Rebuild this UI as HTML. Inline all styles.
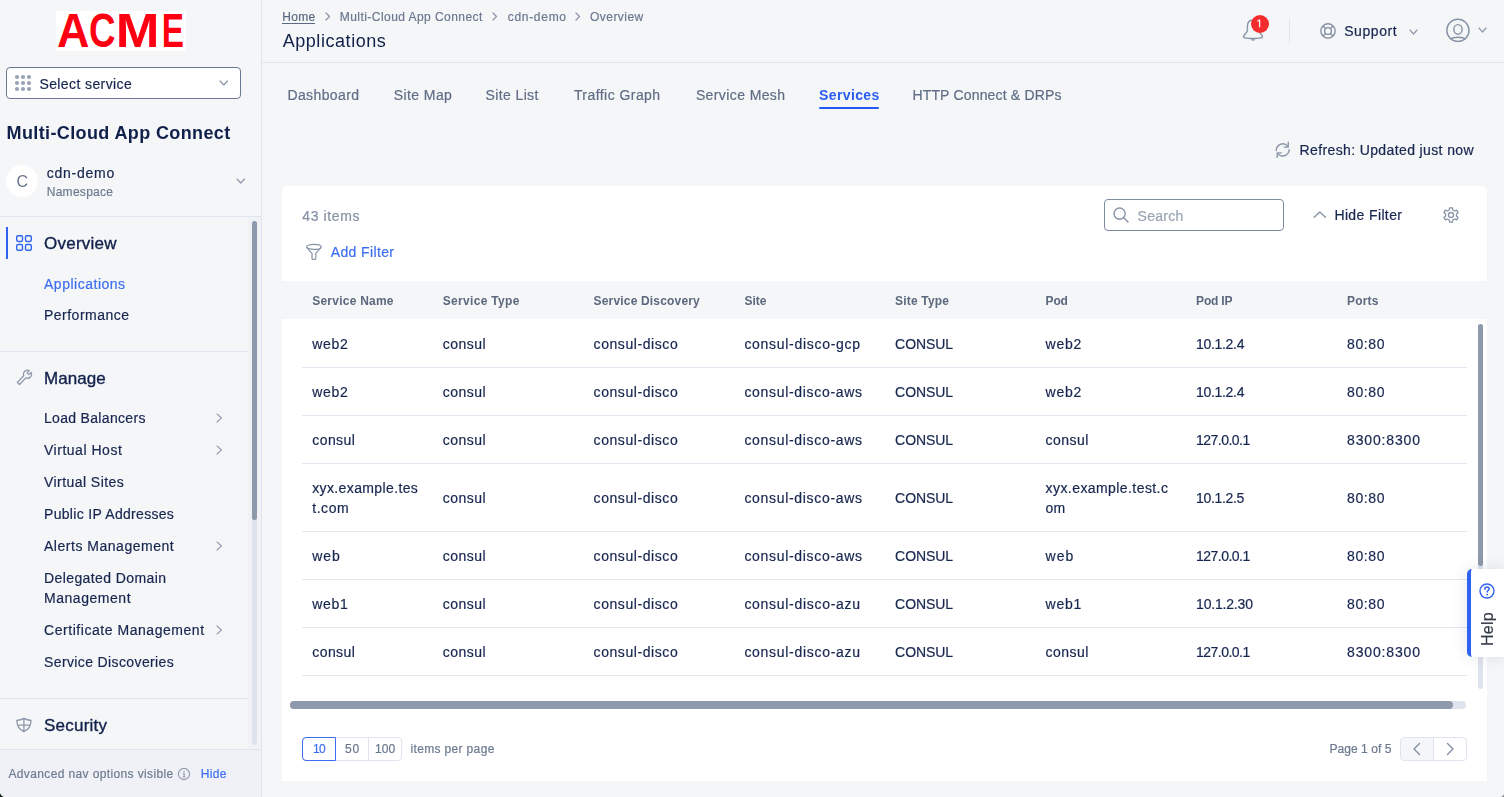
<!DOCTYPE html>
<html><head><meta charset="utf-8"><style>
html,body{margin:0;padding:0}
body{width:1504px;height:797px;overflow:hidden;position:relative;background:#f5f6f8;font-family:"Liberation Sans",sans-serif}
</style></head><body>
<div style="position:absolute;left:0px;top:0px;width:261px;height:797px;background:#f5f6f8"></div>
<div style="position:absolute;left:261px;top:0px;width:1px;height:797px;background:#dfe4ee"></div>
<div style="position:absolute;left:56px;top:11px;width:130px;height:40px;background:#fff"></div>
<svg style="position:absolute;left:50px;top:0px;" width="150" height="60" viewBox="0 0 150 60" fill="none"><text x="7" y="47.4" font-family="Liberation Sans" font-weight="700" font-size="48.5" fill="#ff0012" textLength="32.5" lengthAdjust="spacingAndGlyphs">A</text><text x="39" y="47.4" font-family="Liberation Sans" font-weight="700" font-size="48.5" fill="#ff0012" textLength="26.5" lengthAdjust="spacingAndGlyphs">C</text><text x="65.8" y="47.4" font-family="Liberation Sans" font-weight="700" font-size="48.5" fill="#ff0012" textLength="43.7" lengthAdjust="spacingAndGlyphs">M</text><text x="111.80000000000001" y="47.4" font-family="Liberation Sans" font-weight="700" font-size="48.5" fill="#ff0012" textLength="22.2" lengthAdjust="spacingAndGlyphs">E</text></svg>
<div style="position:absolute;left:6px;top:67px;width:235px;height:32px;background:#fff;border:1px solid #6b7892;border-radius:4px;box-sizing:border-box"></div>
<svg style="position:absolute;left:14px;top:74px;" width="18" height="18" viewBox="0 0 18 18" fill="none"><circle cx="3" cy="3" r="2.1" fill="#98a3b5"/><circle cx="3" cy="9" r="2.1" fill="#98a3b5"/><circle cx="3" cy="15" r="2.1" fill="#98a3b5"/><circle cx="9" cy="3" r="2.1" fill="#98a3b5"/><circle cx="9" cy="9" r="2.1" fill="#98a3b5"/><circle cx="9" cy="15" r="2.1" fill="#98a3b5"/><circle cx="15" cy="3" r="2.1" fill="#98a3b5"/><circle cx="15" cy="9" r="2.1" fill="#98a3b5"/><circle cx="15" cy="15" r="2.1" fill="#98a3b5"/></svg>
<svg style="position:absolute;left:218.25px;top:78.5px;" width="11.5" height="8" viewBox="0 0 11.5 8" fill="none"><path d="M2 2 L5.75 6 L9.5 2" stroke="#8793a6" stroke-width="1.15" stroke-linecap="round" stroke-linejoin="round"/></svg>
<div style="position:absolute;left:6px;top:165px;width:32px;height:32px;border-radius:50%;background:#fff"></div>
<svg style="position:absolute;left:234.75px;top:176.5px;" width="11.5" height="8" viewBox="0 0 11.5 8" fill="none"><path d="M2 2 L5.75 6 L9.5 2" stroke="#8f9aac" stroke-width="1.2" stroke-linecap="round" stroke-linejoin="round"/></svg>
<div style="position:absolute;left:0px;top:216px;width:261px;height:1px;background:#dfe4ee"></div>
<div style="position:absolute;left:248px;top:217px;width:13px;height:532px;background:#f0f2f6"></div>
<div style="position:absolute;left:252px;top:221px;width:5px;height:524px;background:#dfe3ee;border-radius:3px"></div>
<div style="position:absolute;left:252px;top:221px;width:5px;height:299px;background:#8e99ab;border-radius:3px"></div>
<div style="position:absolute;left:6px;top:227px;width:2px;height:32px;background:#2f63f0"></div>
<svg style="position:absolute;left:15px;top:234px;" width="18" height="18" viewBox="0 0 18 18" fill="none"><g stroke="#2f63f0" stroke-width="1.4"><rect x="1.7" y="1.7" width="5.8" height="5.8" rx="1.4"/><rect x="10.5" y="1.7" width="5.8" height="5.8" rx="1.4"/><rect x="1.7" y="10.5" width="5.8" height="5.8" rx="1.4"/><rect x="10.5" y="10.5" width="5.8" height="5.8" rx="1.4"/></g></svg>
<div style="position:absolute;left:0px;top:351px;width:248px;height:1px;background:#dfe4ee"></div>
<svg style="position:absolute;left:15px;top:369px;" width="18" height="18" viewBox="0 0 18 18" fill="none"><path d="M2.32 13.36 L8.79 6.69 A4.0 4.0 0 0 1 14.25 1.60 L12.02 3.90 L13.82 5.64 L16.04 3.34 A4.0 4.0 0 0 1 10.87 8.85 L4.48 15.44 Z" stroke="#8d98aa" stroke-width="1.3" stroke-linejoin="round"/></svg>
<svg style="position:absolute;left:215.25px;top:412.0px;" width="8.5" height="12" viewBox="0 0 8.5 12" fill="none"><path d="M2 2 L6.5 6.0 L2 10" stroke="#97a1b2" stroke-width="1.15" stroke-linecap="round" stroke-linejoin="round"/></svg>
<svg style="position:absolute;left:215.25px;top:444.0px;" width="8.5" height="12" viewBox="0 0 8.5 12" fill="none"><path d="M2 2 L6.5 6.0 L2 10" stroke="#97a1b2" stroke-width="1.15" stroke-linecap="round" stroke-linejoin="round"/></svg>
<svg style="position:absolute;left:215.25px;top:540.0px;" width="8.5" height="12" viewBox="0 0 8.5 12" fill="none"><path d="M2 2 L6.5 6.0 L2 10" stroke="#97a1b2" stroke-width="1.15" stroke-linecap="round" stroke-linejoin="round"/></svg>
<svg style="position:absolute;left:215.25px;top:624.0px;" width="8.5" height="12" viewBox="0 0 8.5 12" fill="none"><path d="M2 2 L6.5 6.0 L2 10" stroke="#97a1b2" stroke-width="1.15" stroke-linecap="round" stroke-linejoin="round"/></svg>
<div style="position:absolute;left:0px;top:698px;width:248px;height:1px;background:#dfe4ee"></div>
<svg style="position:absolute;left:15px;top:716px;" width="18" height="18" viewBox="0 0 18 18" fill="none"><path d="M8.9 2.4 Q12.4 4.1 16 4.5 C16 9.6 13.4 13.6 8.9 15.6 C4.4 13.6 1.8 9.6 1.8 4.5 Q5.4 4.1 8.9 2.4 Z M8.9 2.4 V15.6 M2.4 9.1 H15.4" stroke="#8d98aa" stroke-width="1.3" stroke-linejoin="round"/></svg>
<div style="position:absolute;left:0px;top:749px;width:261px;height:48px;background:#eff1f6"></div>
<div style="position:absolute;left:0px;top:749px;width:261px;height:1px;background:#dfe4ee"></div>
<svg style="position:absolute;left:177px;top:767px;" width="14" height="14" viewBox="0 0 14 14" fill="none"><circle cx="7" cy="7" r="5.6" stroke="#8d98aa" stroke-width="1.1"/><path d="M6 6.3 H7.1 V10 M5.7 10 H8.4" stroke="#8d98aa" stroke-width="1.1"/><circle cx="7" cy="4.4" r="0.7" fill="#8d98aa"/></svg>
<div style="position:absolute;left:262px;top:62px;width:1242px;height:1px;background:#dfe4ee"></div>
<div style="position:absolute;left:282px;top:23px;width:33px;height:1px;background:#5b6a82"></div>
<svg style="position:absolute;left:323.75px;top:11.0px;" width="7.5" height="11" viewBox="0 0 7.5 11" fill="none"><path d="M2 2 L5.5 5.5 L2 9" stroke="#8793a6" stroke-width="1.2" stroke-linecap="round" stroke-linejoin="round"/></svg>
<svg style="position:absolute;left:491.05px;top:11.0px;" width="7.5" height="11" viewBox="0 0 7.5 11" fill="none"><path d="M2 2 L5.5 5.5 L2 9" stroke="#8793a6" stroke-width="1.2" stroke-linecap="round" stroke-linejoin="round"/></svg>
<svg style="position:absolute;left:574.15px;top:11.0px;" width="7.5" height="11" viewBox="0 0 7.5 11" fill="none"><path d="M2 2 L5.5 5.5 L2 9" stroke="#8793a6" stroke-width="1.2" stroke-linecap="round" stroke-linejoin="round"/></svg>
<svg style="position:absolute;left:1240px;top:17px;" width="26" height="26" viewBox="0 0 26 26" fill="none"><path d="M13 3 C9.3 3 7.4 5.8 7.4 9.4 V13.2 C7.4 14.8 5.6 16.4 3.9 18.4 C3.1 19.4 3.6 20.7 5 20.9 C10 21.7 16 21.7 21 20.9 C22.4 20.7 22.9 19.4 22.1 18.4 C20.4 16.4 18.6 14.8 18.6 13.2 V9.4 C18.6 5.8 16.7 3 13 3 Z" stroke="#8793a6" stroke-width="1.4"/><path d="M10.6 22.3 Q13 25.3 15.4 22.3 Z" fill="#8793a6"/></svg>
<div style="position:absolute;left:1251px;top:15px;width:18px;height:18px;border-radius:50%;background:#f42c2c"></div>
<svg style="position:absolute;left:1254px;top:17px;" width="10" height="12" viewBox="0 0 10 12" fill="none"><path d="M3.4 4.3 L5.6 3 V10.2" stroke="#fff" stroke-width="1.3" stroke-linejoin="round"/></svg>
<div style="position:absolute;left:1289px;top:19px;width:1px;height:24px;background:#dfe4ee"></div>
<svg style="position:absolute;left:1318px;top:21px;" width="20" height="20" viewBox="0 0 20 20" fill="none"><circle cx="10" cy="10" r="7.2" stroke="#8793a6" stroke-width="1.4"/><circle cx="10" cy="10" r="3.4" stroke="#8793a6" stroke-width="1.4"/><path d="M5 5 L7.6 7.6 M15 5 L12.4 7.6 M5 15 L7.6 12.4 M15 15 L12.4 12.4" stroke="#8793a6" stroke-width="1.4"/></svg>
<svg style="position:absolute;left:1407.5px;top:28.4px;" width="11" height="8" viewBox="0 0 11 8" fill="none"><path d="M2 2 L5.5 6 L9 2" stroke="#8f9aac" stroke-width="1.2" stroke-linecap="round" stroke-linejoin="round"/></svg>
<svg style="position:absolute;left:1444px;top:17px;" width="28" height="28" viewBox="0 0 28 28" fill="none"><circle cx="13.9" cy="13.3" r="11.1" stroke="#8793a6" stroke-width="1.4"/><ellipse cx="14" cy="12.4" rx="4.1" ry="4.8" stroke="#8793a6" stroke-width="1.4"/><path d="M6.4 22.1 C9.3 19.6 18.7 19.6 21.6 22.1" stroke="#8793a6" stroke-width="1.4"/></svg>
<svg style="position:absolute;left:1476.5px;top:26.4px;" width="11" height="8" viewBox="0 0 11 8" fill="none"><path d="M2 2 L5.5 6 L9 2" stroke="#8f9aac" stroke-width="1.2" stroke-linecap="round" stroke-linejoin="round"/></svg>
<div style="position:absolute;left:819px;top:107px;width:60px;height:2px;background:#2258f5;border-radius:1px"></div>
<svg style="position:absolute;left:1274px;top:141px;" width="18" height="18" viewBox="0 0 18 18" fill="none"><g stroke="#8d98aa" stroke-width="1.4" stroke-linecap="round" stroke-linejoin="round"><path d="M2.3 9.6 A6.5 6.5 0 0 1 13.8 5.2"/><path d="M14.3 1.2 V6.1 H10.1"/><path d="M15.2 8.6 A6.5 6.5 0 0 1 4 12.9"/><path d="M3.2 16.4 V11.9 H7.4"/></g></svg>
<div style="position:absolute;left:282px;top:186px;width:1205px;height:595px;background:#fff;border-radius:5px 5px 0 0"></div>
<div style="position:absolute;left:1104px;top:199px;width:180px;height:32px;border:1px solid #7d8aa0;border-radius:4px;box-sizing:border-box;background:#fff"></div>
<svg style="position:absolute;left:1112px;top:206px;" width="18" height="18" viewBox="0 0 18 18" fill="none"><circle cx="7.6" cy="7.6" r="5.6" stroke="#8793a6" stroke-width="1.4"/><path d="M11.8 11.8 L16 16" stroke="#8793a6" stroke-width="1.4" stroke-linecap="round"/></svg>
<svg style="position:absolute;left:1311px;top:208px;" width="17" height="12" viewBox="0 0 17 12" fill="none"><path d="M3.2 9.3 L8.8 3.9 L14.4 9.3" stroke="#8793a6" stroke-width="1.4" stroke-linecap="round" stroke-linejoin="round"/></svg>
<svg style="position:absolute;left:1442px;top:206px;" width="18" height="18" viewBox="0 0 18 18" fill="none"><path d="M7.6 1.8 H10.4 L10.8 4 L12.6 5 L14.7 4.2 L16.1 6.6 L14.4 8 V10 L16.1 11.4 L14.7 13.8 L12.6 13 L10.8 14 L10.4 16.2 H7.6 L7.2 14 L5.4 13 L3.3 13.8 L1.9 11.4 L3.6 10 V8 L1.9 6.6 L3.3 4.2 L5.4 5 L7.2 4 Z" stroke="#8793a6" stroke-width="1.3" stroke-linejoin="round"/><circle cx="9" cy="9" r="2.5" stroke="#8793a6" stroke-width="1.3"/></svg>
<svg style="position:absolute;left:304px;top:243px;" width="19" height="18" viewBox="0 0 19 18" fill="none"><ellipse cx="9.9" cy="3.9" rx="7.3" ry="2.5" stroke="#8793a6" stroke-width="1.2"/><path d="M2.6 4.3 L8 10.3 V15.6 Q8 16.4 8.8 16.4 H11 Q11.8 16.4 11.8 15.6 V10.3 L17.2 4.3" stroke="#8793a6" stroke-width="1.2" stroke-linejoin="round"/></svg>
<div style="position:absolute;left:282px;top:281px;width:1205px;height:38px;background:#f5f6f8"></div>
<div style="position:absolute;left:302px;top:367px;width:1165px;height:1px;background:#e3e8f0"></div>
<div style="position:absolute;left:302px;top:415px;width:1165px;height:1px;background:#e3e8f0"></div>
<div style="position:absolute;left:302px;top:463px;width:1165px;height:1px;background:#e3e8f0"></div>
<div style="position:absolute;left:302px;top:531px;width:1165px;height:1px;background:#e3e8f0"></div>
<div style="position:absolute;left:302px;top:579px;width:1165px;height:1px;background:#e3e8f0"></div>
<div style="position:absolute;left:302px;top:627px;width:1165px;height:1px;background:#e3e8f0"></div>
<div style="position:absolute;left:302px;top:675px;width:1165px;height:1px;background:#e3e8f0"></div>
<div style="position:absolute;left:1478px;top:324px;width:5px;height:365px;background:#dfe3ee;border-radius:3px"></div>
<div style="position:absolute;left:1478px;top:324px;width:5px;height:242px;background:#8e99ab;border-radius:3px"></div>
<div style="position:absolute;left:290px;top:701px;width:1176px;height:8px;background:#dfe3ee;border-radius:4px"></div>
<div style="position:absolute;left:290px;top:701px;width:1163px;height:8px;background:#8e99ab;border-radius:4px"></div>
<div style="position:absolute;left:302px;top:737px;width:100px;height:24px;box-sizing:border-box;border:1px solid #dfe4ee;border-radius:4px"></div>
<div style="position:absolute;left:368px;top:737px;width:1px;height:24px;background:#dfe4ee"></div>
<div style="position:absolute;left:302px;top:737px;width:34px;height:24px;box-sizing:border-box;border:1px solid #3d6ef0;border-radius:4px 0 0 4px"></div>
<div style="position:absolute;left:1400px;top:737px;width:67px;height:24px;box-sizing:border-box;border:1px solid #dfe4ee;border-radius:4px;overflow:hidden"><div style="position:absolute;left:0;top:0;width:33px;height:24px;background:#f5f6f9"></div></div>
<div style="position:absolute;left:1433px;top:737px;width:1px;height:24px;background:#dfe4ee"></div>
<svg style="position:absolute;left:1411px;top:741px;" width="12" height="16" viewBox="0 0 12 16" fill="none"><path d="M8.5 2.5 L3 8 L8.5 13.5" stroke="#7f8ba0" stroke-width="1.3" stroke-linecap="round" stroke-linejoin="round"/></svg>
<svg style="position:absolute;left:1444px;top:741px;" width="12" height="16" viewBox="0 0 12 16" fill="none"><path d="M3.5 2.5 L9 8 L3.5 13.5" stroke="#7f8ba0" stroke-width="1.3" stroke-linecap="round" stroke-linejoin="round"/></svg>
<div style="position:absolute;left:1467px;top:569px;width:40px;height:88px;background:#fff;border-left:4px solid #2f63f0;border-radius:5px 0 0 5px;box-sizing:border-box;box-shadow:0 0 16px rgba(30,40,70,0.12)"></div>
<svg style="position:absolute;left:1478px;top:582px;" width="18" height="18" viewBox="0 0 18 18" fill="none"><circle cx="9" cy="9" r="7" stroke="#2f63f0" stroke-width="1.4"/><path d="M6.9 7.2 C6.9 5.9 7.8 5.1 9 5.1 C10.2 5.1 11.1 5.9 11.1 7 C11.1 8.4 9.2 8.6 9.2 10.1" stroke="#2f63f0" stroke-width="1.5" stroke-linecap="round"/><circle cx="9.2" cy="12.6" r="0.9" fill="#2f63f0"/></svg>
<div style="position:absolute;left:1480px;top:645.5px;transform-origin:0 0;transform:rotate(-90deg);will-change:transform;font-size:16px;line-height:16px;color:#343b48;white-space:nowrap;letter-spacing:0.25px;-webkit-text-stroke:0.2px #343b48">Help</div>
<div style="position:absolute;left:0;top:792px;width:5px;height:5px;background:radial-gradient(circle at 100% 0, rgba(0,0,0,0) 4.6px, #0d1a0f 5.4px)"></div>
<div style="position:absolute;left:1500px;top:793px;width:4px;height:4px;background:radial-gradient(circle at 0 0, rgba(0,0,0,0) 3.6px, #8a8a8a 4.4px)"></div>

<div style="position:absolute;left:0;top:0;width:1504px;height:797px;will-change:transform"><div style="position:absolute;left:39.40px;top:77.25px;font-size:14px;line-height:14px;font-weight:400;color:#17264f;white-space:nowrap;letter-spacing:0.401px;-webkit-text-stroke:0.2px #17264f;">Select service</div>
<div style="position:absolute;left:6.60px;top:124.25px;font-size:18px;line-height:18px;font-weight:700;color:#10204a;white-space:nowrap;letter-spacing:0.376px;">Multi-Cloud App Connect</div>
<div style="position:absolute;left:16.60px;top:173.75px;font-size:16px;line-height:16px;font-weight:400;color:#66758c;white-space:nowrap;letter-spacing:-0.515px;">C</div>
<div style="position:absolute;left:46.70px;top:166.25px;font-size:14px;line-height:14px;font-weight:400;color:#17264f;white-space:nowrap;letter-spacing:0.761px;-webkit-text-stroke:0.2px #17264f;">cdn-demo</div>
<div style="position:absolute;left:46.70px;top:186.25px;font-size:12px;line-height:12px;font-weight:400;color:#6c7a90;white-space:nowrap;letter-spacing:0.288px;-webkit-text-stroke:0.2px #6c7a90;">Namespace</div>
<div style="position:absolute;left:44.00px;top:235.25px;font-size:17px;line-height:17px;font-weight:500;color:#10204a;white-space:nowrap;letter-spacing:0.244px;-webkit-text-stroke:0.35px #10204a">Overview</div>
<div style="position:absolute;left:44.00px;top:277.25px;font-size:14px;line-height:14px;font-weight:400;color:#3d6ef0;white-space:nowrap;letter-spacing:0.510px;-webkit-text-stroke:0.2px #3d6ef0;">Applications</div>
<div style="position:absolute;left:44.00px;top:308.25px;font-size:14px;line-height:14px;font-weight:400;color:#17264f;white-space:nowrap;letter-spacing:0.487px;-webkit-text-stroke:0.2px #17264f;">Performance</div>
<div style="position:absolute;left:44.00px;top:370.25px;font-size:17px;line-height:17px;font-weight:500;color:#10204a;white-space:nowrap;letter-spacing:0.045px;-webkit-text-stroke:0.35px #10204a">Manage</div>
<div style="position:absolute;left:44.00px;top:411.25px;font-size:14px;line-height:14px;font-weight:400;color:#17264f;white-space:nowrap;letter-spacing:0.316px;-webkit-text-stroke:0.2px #17264f;">Load Balancers</div>
<div style="position:absolute;left:44.00px;top:443.25px;font-size:14px;line-height:14px;font-weight:400;color:#17264f;white-space:nowrap;letter-spacing:0.518px;-webkit-text-stroke:0.2px #17264f;">Virtual Host</div>
<div style="position:absolute;left:44.00px;top:475.25px;font-size:14px;line-height:14px;font-weight:400;color:#17264f;white-space:nowrap;letter-spacing:0.441px;-webkit-text-stroke:0.2px #17264f;">Virtual Sites</div>
<div style="position:absolute;left:44.00px;top:507.25px;font-size:14px;line-height:14px;font-weight:400;color:#17264f;white-space:nowrap;letter-spacing:0.312px;-webkit-text-stroke:0.2px #17264f;">Public IP Addresses</div>
<div style="position:absolute;left:44.00px;top:539.25px;font-size:14px;line-height:14px;font-weight:400;color:#17264f;white-space:nowrap;letter-spacing:0.519px;-webkit-text-stroke:0.2px #17264f;">Alerts Management</div>
<div style="position:absolute;left:44.00px;top:571.25px;font-size:14px;line-height:14px;font-weight:400;color:#17264f;white-space:nowrap;letter-spacing:0.407px;-webkit-text-stroke:0.2px #17264f;">Delegated Domain</div>
<div style="position:absolute;left:44.00px;top:591.25px;font-size:14px;line-height:14px;font-weight:400;color:#17264f;white-space:nowrap;letter-spacing:0.541px;-webkit-text-stroke:0.2px #17264f;">Management</div>
<div style="position:absolute;left:44.00px;top:623.25px;font-size:14px;line-height:14px;font-weight:400;color:#17264f;white-space:nowrap;letter-spacing:0.546px;-webkit-text-stroke:0.2px #17264f;">Certificate Management</div>
<div style="position:absolute;left:44.00px;top:655.25px;font-size:14px;line-height:14px;font-weight:400;color:#17264f;white-space:nowrap;letter-spacing:0.380px;-webkit-text-stroke:0.2px #17264f;">Service Discoveries</div>
<div style="position:absolute;left:44.00px;top:717.25px;font-size:17px;line-height:17px;font-weight:500;color:#10204a;white-space:nowrap;letter-spacing:0.223px;-webkit-text-stroke:0.35px #10204a">Security</div>
<div style="position:absolute;left:8.40px;top:768.25px;font-size:12px;line-height:12px;font-weight:400;color:#6e7b90;white-space:nowrap;letter-spacing:0.375px;-webkit-text-stroke:0.2px #6e7b90;">Advanced nav options visible</div>
<div style="position:absolute;left:200.70px;top:768.25px;font-size:12px;line-height:12px;font-weight:400;color:#3d6ef0;white-space:nowrap;letter-spacing:0.372px;-webkit-text-stroke:0.2px #3d6ef0;">Hide</div>
<div style="position:absolute;left:282.30px;top:11.25px;font-size:12px;line-height:12px;font-weight:400;color:#5b6a82;white-space:nowrap;letter-spacing:0.306px;-webkit-text-stroke:0.2px #5b6a82;">Home</div>
<div style="position:absolute;left:339.80px;top:11.25px;font-size:12px;line-height:12px;font-weight:400;color:#6a788e;white-space:nowrap;letter-spacing:0.444px;-webkit-text-stroke:0.2px #6a788e;">Multi-Cloud App Connect</div>
<div style="position:absolute;left:507.70px;top:11.25px;font-size:12px;line-height:12px;font-weight:400;color:#6a788e;white-space:nowrap;letter-spacing:0.709px;-webkit-text-stroke:0.2px #6a788e;">cdn-demo</div>
<div style="position:absolute;left:590.00px;top:11.25px;font-size:12px;line-height:12px;font-weight:400;color:#6a788e;white-space:nowrap;letter-spacing:0.463px;-webkit-text-stroke:0.2px #6a788e;">Overview</div>
<div style="position:absolute;left:282.70px;top:32.25px;font-size:18px;line-height:18px;font-weight:400;color:#10204a;white-space:nowrap;letter-spacing:0.553px;">Applications</div>
<div style="position:absolute;left:1344.20px;top:24.25px;font-size:14px;line-height:14px;font-weight:400;color:#17264f;white-space:nowrap;letter-spacing:0.589px;-webkit-text-stroke:0.2px #17264f;">Support</div>
<div style="position:absolute;left:287.40px;top:88.25px;font-size:14px;line-height:14px;font-weight:400;color:#5f6d85;white-space:nowrap;letter-spacing:0.397px;-webkit-text-stroke:0.2px #5f6d85;">Dashboard</div>
<div style="position:absolute;left:393.80px;top:88.25px;font-size:14px;line-height:14px;font-weight:400;color:#5f6d85;white-space:nowrap;letter-spacing:0.402px;-webkit-text-stroke:0.2px #5f6d85;">Site Map</div>
<div style="position:absolute;left:485.60px;top:88.25px;font-size:14px;line-height:14px;font-weight:400;color:#5f6d85;white-space:nowrap;letter-spacing:0.372px;-webkit-text-stroke:0.2px #5f6d85;">Site List</div>
<div style="position:absolute;left:573.90px;top:88.25px;font-size:14px;line-height:14px;font-weight:400;color:#5f6d85;white-space:nowrap;letter-spacing:0.443px;-webkit-text-stroke:0.2px #5f6d85;">Traffic Graph</div>
<div style="position:absolute;left:695.90px;top:88.25px;font-size:14px;line-height:14px;font-weight:400;color:#5f6d85;white-space:nowrap;letter-spacing:0.396px;-webkit-text-stroke:0.2px #5f6d85;">Service Mesh</div>
<div style="position:absolute;left:912.40px;top:88.25px;font-size:14px;line-height:14px;font-weight:400;color:#5f6d85;white-space:nowrap;letter-spacing:0.173px;-webkit-text-stroke:0.2px #5f6d85;">HTTP Connect &amp; DRPs</div>
<div style="position:absolute;left:819.00px;top:88.25px;font-size:14px;line-height:14px;font-weight:700;color:#2a5df2;white-space:nowrap;letter-spacing:0.380px;">Services</div>
<div style="position:absolute;left:1299.50px;top:143.25px;font-size:14px;line-height:14px;font-weight:400;color:#17264f;white-space:nowrap;letter-spacing:0.379px;-webkit-text-stroke:0.2px #17264f;">Refresh: Updated just now</div>
<div style="position:absolute;left:302.30px;top:209.25px;font-size:14px;line-height:14px;font-weight:400;color:#8390a3;white-space:nowrap;letter-spacing:0.607px;-webkit-text-stroke:0.2px #8390a3;">43 items</div>
<div style="position:absolute;left:1137.60px;top:209.25px;font-size:14px;line-height:14px;font-weight:400;color:#9ba4b4;white-space:nowrap;letter-spacing:0.255px;-webkit-text-stroke:0.2px #9ba4b4;">Search</div>
<div style="position:absolute;left:1334.40px;top:208.25px;font-size:14px;line-height:14px;font-weight:400;color:#17264f;white-space:nowrap;letter-spacing:0.378px;-webkit-text-stroke:0.2px #17264f;">Hide Filter</div>
<div style="position:absolute;left:330.70px;top:245.25px;font-size:14px;line-height:14px;font-weight:400;color:#3d6ef0;white-space:nowrap;letter-spacing:0.374px;-webkit-text-stroke:0.2px #3d6ef0;">Add Filter</div>
<div style="position:absolute;left:312.20px;top:295.25px;font-size:12px;line-height:12px;font-weight:700;color:#5b687d;white-space:nowrap;letter-spacing:0.240px;">Service Name</div>
<div style="position:absolute;left:442.80px;top:295.25px;font-size:12px;line-height:12px;font-weight:700;color:#5b687d;white-space:nowrap;letter-spacing:0.307px;">Service Type</div>
<div style="position:absolute;left:593.60px;top:295.25px;font-size:12px;line-height:12px;font-weight:700;color:#5b687d;white-space:nowrap;letter-spacing:0.174px;">Service Discovery</div>
<div style="position:absolute;left:744.40px;top:295.25px;font-size:12px;line-height:12px;font-weight:700;color:#5b687d;white-space:nowrap;letter-spacing:0.049px;">Site</div>
<div style="position:absolute;left:895.10px;top:295.25px;font-size:12px;line-height:12px;font-weight:700;color:#5b687d;white-space:nowrap;letter-spacing:0.179px;">Site Type</div>
<div style="position:absolute;left:1045.60px;top:295.25px;font-size:12px;line-height:12px;font-weight:700;color:#5b687d;white-space:nowrap;letter-spacing:-0.194px;">Pod</div>
<div style="position:absolute;left:1196.10px;top:295.25px;font-size:12px;line-height:12px;font-weight:700;color:#5b687d;white-space:nowrap;letter-spacing:-0.192px;">Pod IP</div>
<div style="position:absolute;left:1347.00px;top:295.25px;font-size:12px;line-height:12px;font-weight:700;color:#5b687d;white-space:nowrap;letter-spacing:0.201px;">Ports</div>
<div style="position:absolute;left:312.20px;top:337.25px;font-size:14px;line-height:14px;font-weight:400;color:#17264f;white-space:nowrap;letter-spacing:0.740px;-webkit-text-stroke:0.2px #17264f;">web2</div>
<div style="position:absolute;left:442.80px;top:337.25px;font-size:14px;line-height:14px;font-weight:400;color:#17264f;white-space:nowrap;letter-spacing:0.453px;-webkit-text-stroke:0.2px #17264f;">consul</div>
<div style="position:absolute;left:593.60px;top:337.25px;font-size:14px;line-height:14px;font-weight:400;color:#17264f;white-space:nowrap;letter-spacing:0.569px;-webkit-text-stroke:0.2px #17264f;">consul-disco</div>
<div style="position:absolute;left:744.40px;top:337.25px;font-size:14px;line-height:14px;font-weight:400;color:#17264f;white-space:nowrap;letter-spacing:0.710px;-webkit-text-stroke:0.2px #17264f;">consul-disco-gcp</div>
<div style="position:absolute;left:895.10px;top:337.25px;font-size:14px;line-height:14px;font-weight:400;color:#17264f;white-space:nowrap;letter-spacing:-0.070px;-webkit-text-stroke:0.2px #17264f;">CONSUL</div>
<div style="position:absolute;left:1045.60px;top:337.25px;font-size:14px;line-height:14px;font-weight:400;color:#17264f;white-space:nowrap;letter-spacing:0.740px;-webkit-text-stroke:0.2px #17264f;">web2</div>
<div style="position:absolute;left:1196.10px;top:337.25px;font-size:14px;line-height:14px;font-weight:400;color:#17264f;white-space:nowrap;letter-spacing:-0.325px;-webkit-text-stroke:0.2px #17264f;">10.1.2.4</div>
<div style="position:absolute;left:1347.00px;top:337.25px;font-size:14px;line-height:14px;font-weight:400;color:#17264f;white-space:nowrap;letter-spacing:0.628px;-webkit-text-stroke:0.2px #17264f;">80:80</div>
<div style="position:absolute;left:312.20px;top:385.25px;font-size:14px;line-height:14px;font-weight:400;color:#17264f;white-space:nowrap;letter-spacing:0.740px;-webkit-text-stroke:0.2px #17264f;">web2</div>
<div style="position:absolute;left:442.80px;top:385.25px;font-size:14px;line-height:14px;font-weight:400;color:#17264f;white-space:nowrap;letter-spacing:0.453px;-webkit-text-stroke:0.2px #17264f;">consul</div>
<div style="position:absolute;left:593.60px;top:385.25px;font-size:14px;line-height:14px;font-weight:400;color:#17264f;white-space:nowrap;letter-spacing:0.569px;-webkit-text-stroke:0.2px #17264f;">consul-disco</div>
<div style="position:absolute;left:744.40px;top:385.25px;font-size:14px;line-height:14px;font-weight:400;color:#17264f;white-space:nowrap;letter-spacing:0.683px;-webkit-text-stroke:0.2px #17264f;">consul-disco-aws</div>
<div style="position:absolute;left:895.10px;top:385.25px;font-size:14px;line-height:14px;font-weight:400;color:#17264f;white-space:nowrap;letter-spacing:-0.070px;-webkit-text-stroke:0.2px #17264f;">CONSUL</div>
<div style="position:absolute;left:1045.60px;top:385.25px;font-size:14px;line-height:14px;font-weight:400;color:#17264f;white-space:nowrap;letter-spacing:0.740px;-webkit-text-stroke:0.2px #17264f;">web2</div>
<div style="position:absolute;left:1196.10px;top:385.25px;font-size:14px;line-height:14px;font-weight:400;color:#17264f;white-space:nowrap;letter-spacing:-0.325px;-webkit-text-stroke:0.2px #17264f;">10.1.2.4</div>
<div style="position:absolute;left:1347.00px;top:385.25px;font-size:14px;line-height:14px;font-weight:400;color:#17264f;white-space:nowrap;letter-spacing:0.628px;-webkit-text-stroke:0.2px #17264f;">80:80</div>
<div style="position:absolute;left:312.20px;top:433.25px;font-size:14px;line-height:14px;font-weight:400;color:#17264f;white-space:nowrap;letter-spacing:0.453px;-webkit-text-stroke:0.2px #17264f;">consul</div>
<div style="position:absolute;left:442.80px;top:433.25px;font-size:14px;line-height:14px;font-weight:400;color:#17264f;white-space:nowrap;letter-spacing:0.453px;-webkit-text-stroke:0.2px #17264f;">consul</div>
<div style="position:absolute;left:593.60px;top:433.25px;font-size:14px;line-height:14px;font-weight:400;color:#17264f;white-space:nowrap;letter-spacing:0.569px;-webkit-text-stroke:0.2px #17264f;">consul-disco</div>
<div style="position:absolute;left:744.40px;top:433.25px;font-size:14px;line-height:14px;font-weight:400;color:#17264f;white-space:nowrap;letter-spacing:0.683px;-webkit-text-stroke:0.2px #17264f;">consul-disco-aws</div>
<div style="position:absolute;left:895.10px;top:433.25px;font-size:14px;line-height:14px;font-weight:400;color:#17264f;white-space:nowrap;letter-spacing:-0.070px;-webkit-text-stroke:0.2px #17264f;">CONSUL</div>
<div style="position:absolute;left:1045.60px;top:433.25px;font-size:14px;line-height:14px;font-weight:400;color:#17264f;white-space:nowrap;letter-spacing:0.453px;-webkit-text-stroke:0.2px #17264f;">consul</div>
<div style="position:absolute;left:1196.10px;top:433.25px;font-size:14px;line-height:14px;font-weight:400;color:#17264f;white-space:nowrap;letter-spacing:-0.532px;-webkit-text-stroke:0.2px #17264f;">127.0.0.1</div>
<div style="position:absolute;left:1347.00px;top:433.25px;font-size:14px;line-height:14px;font-weight:400;color:#17264f;white-space:nowrap;letter-spacing:0.845px;-webkit-text-stroke:0.2px #17264f;">8300:8300</div>
<div style="position:absolute;left:312.20px;top:481.25px;font-size:14px;line-height:14px;font-weight:400;color:#17264f;white-space:nowrap;letter-spacing:0.378px;-webkit-text-stroke:0.2px #17264f;">xyx.example.tes</div>
<div style="position:absolute;left:312.20px;top:501.25px;font-size:14px;line-height:14px;font-weight:400;color:#17264f;white-space:nowrap;letter-spacing:0.563px;-webkit-text-stroke:0.2px #17264f;">t.com</div>
<div style="position:absolute;left:442.80px;top:491.25px;font-size:14px;line-height:14px;font-weight:400;color:#17264f;white-space:nowrap;letter-spacing:0.453px;-webkit-text-stroke:0.2px #17264f;">consul</div>
<div style="position:absolute;left:593.60px;top:491.25px;font-size:14px;line-height:14px;font-weight:400;color:#17264f;white-space:nowrap;letter-spacing:0.569px;-webkit-text-stroke:0.2px #17264f;">consul-disco</div>
<div style="position:absolute;left:744.40px;top:491.25px;font-size:14px;line-height:14px;font-weight:400;color:#17264f;white-space:nowrap;letter-spacing:0.683px;-webkit-text-stroke:0.2px #17264f;">consul-disco-aws</div>
<div style="position:absolute;left:895.10px;top:491.25px;font-size:14px;line-height:14px;font-weight:400;color:#17264f;white-space:nowrap;letter-spacing:-0.070px;-webkit-text-stroke:0.2px #17264f;">CONSUL</div>
<div style="position:absolute;left:1045.60px;top:481.25px;font-size:14px;line-height:14px;font-weight:400;color:#17264f;white-space:nowrap;letter-spacing:0.423px;-webkit-text-stroke:0.2px #17264f;">xyx.example.test.c</div>
<div style="position:absolute;left:1045.60px;top:501.25px;font-size:14px;line-height:14px;font-weight:400;color:#17264f;white-space:nowrap;letter-spacing:0.075px;-webkit-text-stroke:0.2px #17264f;">om</div>
<div style="position:absolute;left:1196.10px;top:491.25px;font-size:14px;line-height:14px;font-weight:400;color:#17264f;white-space:nowrap;letter-spacing:-0.339px;-webkit-text-stroke:0.2px #17264f;">10.1.2.5</div>
<div style="position:absolute;left:1347.00px;top:491.25px;font-size:14px;line-height:14px;font-weight:400;color:#17264f;white-space:nowrap;letter-spacing:0.628px;-webkit-text-stroke:0.2px #17264f;">80:80</div>
<div style="position:absolute;left:312.20px;top:549.25px;font-size:14px;line-height:14px;font-weight:400;color:#17264f;white-space:nowrap;letter-spacing:0.951px;-webkit-text-stroke:0.2px #17264f;">web</div>
<div style="position:absolute;left:442.80px;top:549.25px;font-size:14px;line-height:14px;font-weight:400;color:#17264f;white-space:nowrap;letter-spacing:0.453px;-webkit-text-stroke:0.2px #17264f;">consul</div>
<div style="position:absolute;left:593.60px;top:549.25px;font-size:14px;line-height:14px;font-weight:400;color:#17264f;white-space:nowrap;letter-spacing:0.569px;-webkit-text-stroke:0.2px #17264f;">consul-disco</div>
<div style="position:absolute;left:744.40px;top:549.25px;font-size:14px;line-height:14px;font-weight:400;color:#17264f;white-space:nowrap;letter-spacing:0.683px;-webkit-text-stroke:0.2px #17264f;">consul-disco-aws</div>
<div style="position:absolute;left:895.10px;top:549.25px;font-size:14px;line-height:14px;font-weight:400;color:#17264f;white-space:nowrap;letter-spacing:-0.070px;-webkit-text-stroke:0.2px #17264f;">CONSUL</div>
<div style="position:absolute;left:1045.60px;top:549.25px;font-size:14px;line-height:14px;font-weight:400;color:#17264f;white-space:nowrap;letter-spacing:0.951px;-webkit-text-stroke:0.2px #17264f;">web</div>
<div style="position:absolute;left:1196.10px;top:549.25px;font-size:14px;line-height:14px;font-weight:400;color:#17264f;white-space:nowrap;letter-spacing:-0.532px;-webkit-text-stroke:0.2px #17264f;">127.0.0.1</div>
<div style="position:absolute;left:1347.00px;top:549.25px;font-size:14px;line-height:14px;font-weight:400;color:#17264f;white-space:nowrap;letter-spacing:0.628px;-webkit-text-stroke:0.2px #17264f;">80:80</div>
<div style="position:absolute;left:312.20px;top:597.25px;font-size:14px;line-height:14px;font-weight:400;color:#17264f;white-space:nowrap;letter-spacing:0.740px;-webkit-text-stroke:0.2px #17264f;">web1</div>
<div style="position:absolute;left:442.80px;top:597.25px;font-size:14px;line-height:14px;font-weight:400;color:#17264f;white-space:nowrap;letter-spacing:0.453px;-webkit-text-stroke:0.2px #17264f;">consul</div>
<div style="position:absolute;left:593.60px;top:597.25px;font-size:14px;line-height:14px;font-weight:400;color:#17264f;white-space:nowrap;letter-spacing:0.569px;-webkit-text-stroke:0.2px #17264f;">consul-disco</div>
<div style="position:absolute;left:744.40px;top:597.25px;font-size:14px;line-height:14px;font-weight:400;color:#17264f;white-space:nowrap;letter-spacing:0.710px;-webkit-text-stroke:0.2px #17264f;">consul-disco-azu</div>
<div style="position:absolute;left:895.10px;top:597.25px;font-size:14px;line-height:14px;font-weight:400;color:#17264f;white-space:nowrap;letter-spacing:-0.070px;-webkit-text-stroke:0.2px #17264f;">CONSUL</div>
<div style="position:absolute;left:1045.60px;top:597.25px;font-size:14px;line-height:14px;font-weight:400;color:#17264f;white-space:nowrap;letter-spacing:0.740px;-webkit-text-stroke:0.2px #17264f;">web1</div>
<div style="position:absolute;left:1196.10px;top:597.25px;font-size:14px;line-height:14px;font-weight:400;color:#17264f;white-space:nowrap;letter-spacing:-0.191px;-webkit-text-stroke:0.2px #17264f;">10.1.2.30</div>
<div style="position:absolute;left:1347.00px;top:597.25px;font-size:14px;line-height:14px;font-weight:400;color:#17264f;white-space:nowrap;letter-spacing:0.628px;-webkit-text-stroke:0.2px #17264f;">80:80</div>
<div style="position:absolute;left:312.20px;top:645.25px;font-size:14px;line-height:14px;font-weight:400;color:#17264f;white-space:nowrap;letter-spacing:0.453px;-webkit-text-stroke:0.2px #17264f;">consul</div>
<div style="position:absolute;left:442.80px;top:645.25px;font-size:14px;line-height:14px;font-weight:400;color:#17264f;white-space:nowrap;letter-spacing:0.453px;-webkit-text-stroke:0.2px #17264f;">consul</div>
<div style="position:absolute;left:593.60px;top:645.25px;font-size:14px;line-height:14px;font-weight:400;color:#17264f;white-space:nowrap;letter-spacing:0.569px;-webkit-text-stroke:0.2px #17264f;">consul-disco</div>
<div style="position:absolute;left:744.40px;top:645.25px;font-size:14px;line-height:14px;font-weight:400;color:#17264f;white-space:nowrap;letter-spacing:0.710px;-webkit-text-stroke:0.2px #17264f;">consul-disco-azu</div>
<div style="position:absolute;left:895.10px;top:645.25px;font-size:14px;line-height:14px;font-weight:400;color:#17264f;white-space:nowrap;letter-spacing:-0.070px;-webkit-text-stroke:0.2px #17264f;">CONSUL</div>
<div style="position:absolute;left:1045.60px;top:645.25px;font-size:14px;line-height:14px;font-weight:400;color:#17264f;white-space:nowrap;letter-spacing:0.453px;-webkit-text-stroke:0.2px #17264f;">consul</div>
<div style="position:absolute;left:1196.10px;top:645.25px;font-size:14px;line-height:14px;font-weight:400;color:#17264f;white-space:nowrap;letter-spacing:-0.532px;-webkit-text-stroke:0.2px #17264f;">127.0.0.1</div>
<div style="position:absolute;left:1347.00px;top:645.25px;font-size:14px;line-height:14px;font-weight:400;color:#17264f;white-space:nowrap;letter-spacing:0.845px;-webkit-text-stroke:0.2px #17264f;">8300:8300</div>
<div style="position:absolute;left:312.90px;top:743.25px;font-size:12px;line-height:12px;font-weight:400;color:#3d6ef0;white-space:nowrap;letter-spacing:-0.512px;-webkit-text-stroke:0.2px #3d6ef0;">10</div>
<div style="position:absolute;left:344.90px;top:743.25px;font-size:12px;line-height:12px;font-weight:400;color:#6a788e;white-space:nowrap;letter-spacing:0.955px;-webkit-text-stroke:0.2px #6a788e;">50</div>
<div style="position:absolute;left:374.90px;top:743.25px;font-size:12px;line-height:12px;font-weight:400;color:#6a788e;white-space:nowrap;letter-spacing:0.183px;-webkit-text-stroke:0.2px #6a788e;">100</div>
<div style="position:absolute;left:410.60px;top:743.25px;font-size:12px;line-height:12px;font-weight:400;color:#6a788e;white-space:nowrap;letter-spacing:0.334px;-webkit-text-stroke:0.2px #6a788e;">items per page</div>
<div style="position:absolute;left:1329.40px;top:743.25px;font-size:12px;line-height:12px;font-weight:400;color:#6a788e;white-space:nowrap;letter-spacing:0.066px;-webkit-text-stroke:0.2px #6a788e;">Page 1 of 5</div></div>
</body></html>
